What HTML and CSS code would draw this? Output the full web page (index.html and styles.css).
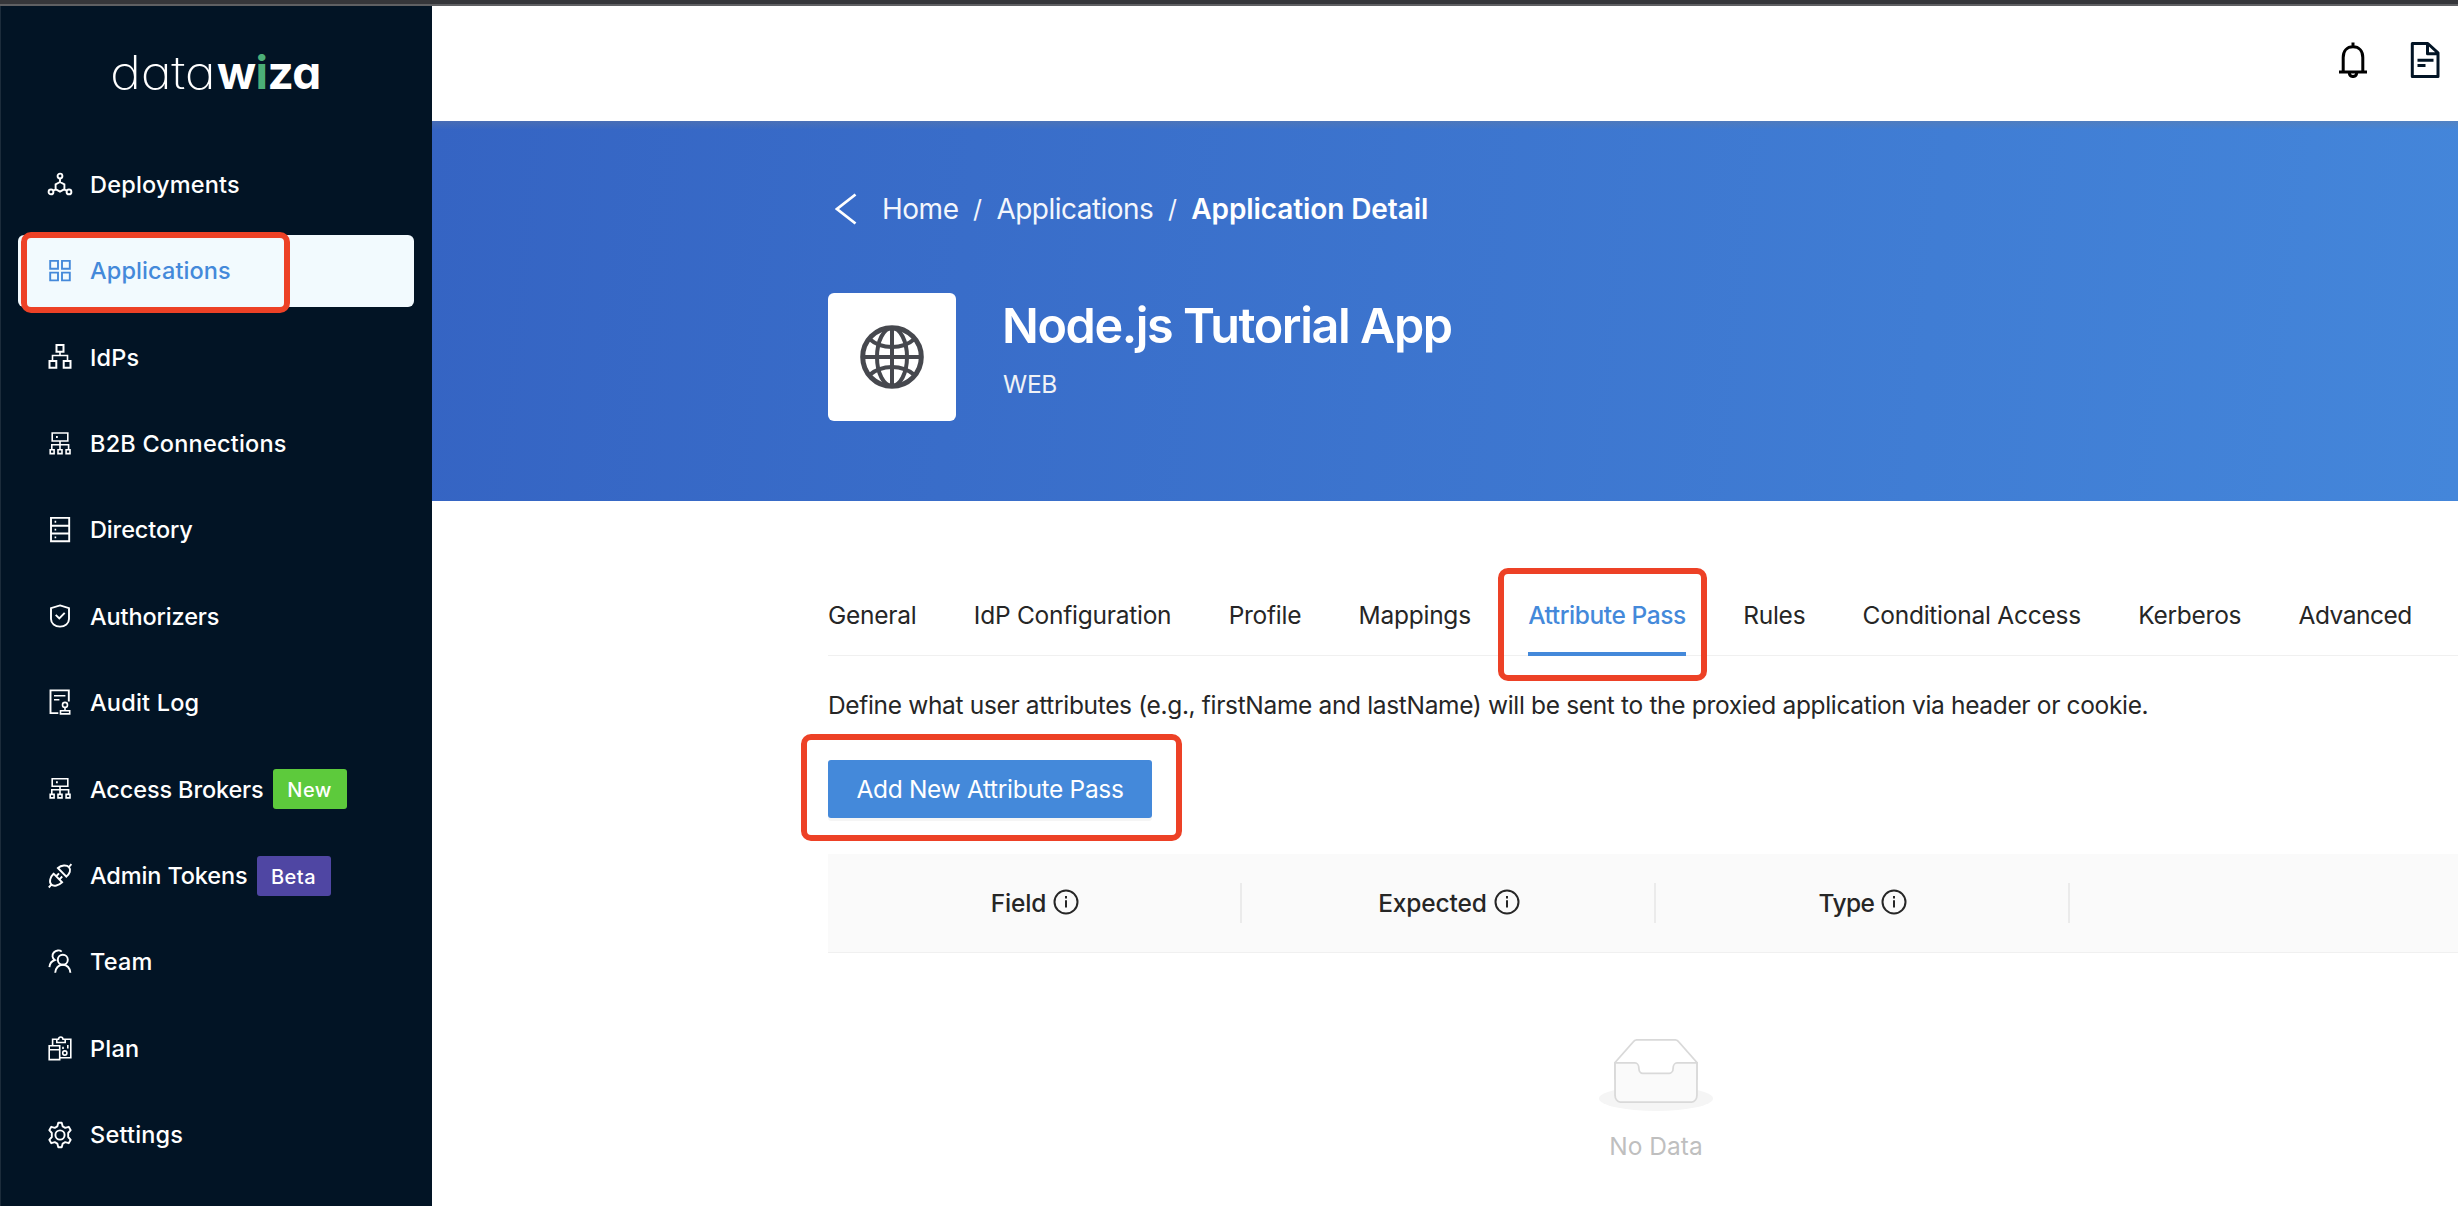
FILE: index.html
```html
<!DOCTYPE html>
<html lang="en">
<head>
<meta charset="utf-8">
<title>Datawiza - Application Detail</title>
<link rel="stylesheet" href="styles.css">
</head>
<body>
<div class="window-edge"></div>
<div class="shell">
  <aside class="sidebar">
    <div class="logo"><span class="logo-thin">data</span><span class="logo-bold">w<span class="logo-i">i</span>za</span></div>
    <nav class="menu">
      <a class="item"><svg class="icon" viewBox="0 0 26 26"><circle cx="13" cy="4" r="2.4"/><circle cx="4" cy="19.9" r="2.4"/><circle cx="22" cy="19.9" r="2.4"/><path d="M13 6.5v4M6.2 18.8l2.6-1.6M19.8 18.8l-2.6-1.6M13 10l4.4 2.4v4.8L13 19.6l-4.4-2.4v-4.8z"/></svg><span>Deployments</span></a>
      <a class="item active"><svg class="icon" viewBox="0 0 26 26"><path d="M3.2 2.900h7.800v7.900H3.200zM15 2.900h7.800v7.900H15zM3.200 14.600h7.800v7.800H3.200zM15 14.600h7.800v7.800H15z"/></svg><span>Applications</span><i class="mark mark-menu"></i></a>
      <a class="item"><svg class="icon bold" viewBox="0 0 26 26"><path d="M9.500 1h7v6.800h-7zM2.500 17h6.800v6.800H2.500zM16.700 17h6.800v6.800h-6.800z"/><path class="fine" d="M13 8v3.500M5.500 16.500v-5h15v5"/></svg><span>IdPs</span></a>
      <a class="item"><svg class="icon fine" viewBox="0 0 26 26"><path d="M5.200 2h15.600v8H5.200zM13 10v8.500M4.800 18.500v-4.800h16.800v4.800M3.200 18.700h3.900v3.900H3.200zM11 18.700h4v3.900h-4zM19.100 18.700h3.900v3.900h-3.900z"/><path d="M9 6h1.800" stroke-width="2"/></svg><span>B2B Connections</span></a>
      <a class="item"><svg class="icon" viewBox="0 0 26 26"><path d="M4 .9h18.200v23.400H4zM4 8.700h18.200M4 16.500h18.200"/><path d="M7.600 4.800h1.600M7.600 12.600h1.600M7.600 20.400h1.600"/></svg><span class="tight">Directory</span></a>
      <a class="item"><svg class="icon" viewBox="0 0 26 26"><path d="M13 1.400l9 2.700v11c0 4.400-4 7.300-9 7.500-5-.2-9-3.100-9-7.500v-11zM8.700 10.900l3.600 3.600 5.400-5.700"/></svg><span class="tight">Authorizers</span></a>
      <a class="item"><svg class="icon" viewBox="0 0 26 26"><path d="M21.800 11.500V.4H3.500v22.700h7.800"/><path class="fine" d="M7 5.700h11.400M7 9.800h5.400"/><circle cx="18" cy="14.900" r="2.500" class="fine"/><path class="fine" d="M18 17.400v3M13.500 20.700h9.200v3.200h-9.200z"/></svg><span>Audit Log</span></a>
      <a class="item"><svg class="icon fine" viewBox="0 0 26 26"><path d="M5.200 2.700h15.600v7.600H5.200zM13 10.300v8.200M4.800 18.500v-4.800h16.800v4.800M3.200 18.400h3.900v3.500H3.200zM11 18.400h4v3.500h-4zM19.100 18.400h3.900v3.500h-3.900z"/><path d="M9 6.300h1.800" stroke-width="2"/></svg><span class="tight">Access Brokers</span><b class="tag green">New</b></a>
      <a class="item"><svg class="icon" viewBox="0 0 26 26"><path d="M1.800 24.500l2.600-2.800M21.900 4l2.500-2.900M10.900 5l8.500 8.600c3.200-2.700 5-6.700 2.700-9.300S14.300 2 10.900 5zM6.600 10.700l8.500 8.600c-3.400 3.200-8.300 4.600-10.800 2.200s-1.100-7.700 2.300-10.800zM9 13.500l3-3.200M12.200 16.700l3-3.200"/></svg><span class="tight">Admin Tokens</span><b class="tag purple">Beta</b></a>
      <a class="item"><svg class="icon" viewBox="0 0 26 26"><circle cx="15.800" cy="10.800" r="5"/><path d="M8.200 23.800c.2-4.800 3.400-8 7.600-8s7.400 3.200 7.600 8M14.700 2.600C12.700.8 9 1 6.800 3.500S5.300 9.300 7.800 11c-3.200 1-5 3.300-5.400 7.200"/></svg><span>Team</span></a>
      <a class="item"><svg class="icon fine" viewBox="0 0 26 26"><path d="M5.600 9.500V3.200h5M15.800 3.200h8v18.500H13M9.800 6.500V3.200h1.700c.2-3 4.300-3 4.500 0h2.200v3.300zM2.200 9.800h10.500v13.800H2.200zM2.200 13.700h10.500M16 13v-2.200M20.800 12.500V9"/><circle cx="17.800" cy="17" r="2.100"/></svg><span>Plan</span></a>
      <a class="item"><svg class="icon" viewBox="0 0 26 26" stroke-linejoin="round"><circle cx="13" cy="13" r="4.600"/><path d="M11.300.8h3.400l1 3.600 2.500 1.400 3.500-1 2 3.400-2.500 2.800v4l2.500 2.800-2 3.400-3.500-1-2.500 1.400-1 3.600h-3.400l-1-3.600-2.500-1.400-3.500 1-2-3.400L4.800 15v-4L2.300 8.200l2-3.400 3.500 1 2.500-1.400z"/></svg><span>Settings</span></a>
    </nav>
  </aside>
  <main class="main">
    <header class="topbar">
      <svg class="bell" viewBox="0 0 28 36"><path d="M14 .5V5M4.200 29V15.500C4.200 9 8 4.800 14 4.800S23.800 9 23.800 15.500V29M0 30h28"/><path d="M10.300 31c.3 4.700 7.100 4.700 7.400 0"/></svg>
      <svg class="doc" viewBox="0 0 30 36"><path d="M2.300 1.500h15.500L28 10.800v23.700H2.300zM17.500 1.500v10.300H28"/><path d="M7.500 18.200h16M7.500 23.600h8"/></svg>
    </header>
    <section class="hero">
      <div class="crumbs">
        <svg class="back" viewBox="0 0 22 32"><path d="M20.500 1.500L2 16l18.500 14.500"/></svg>
        <span class="c-home">Home</span><span class="slash">/</span><span class="c-apps">Applications</span><span class="slash">/</span><strong>Application Detail</strong>
      </div>
      <div class="app">
        <div class="app-icon"><svg viewBox="0 0 64 64"><circle cx="32" cy="32" r="29.300" stroke-width="5"/><path d="M32 2v60M2 32h60" stroke-width="4"/><ellipse cx="32" cy="32" rx="15" ry="29" stroke-width="4"/><path d="M9.500 14c12 10.700 33 10.700 45 0M9.500 50c12-10.700 33-10.700 45 0" stroke-width="4"/></svg></div>
        <div>
          <h1>Node.js Tutorial App</h1>
          <div class="kind">WEB</div>
        </div>
      </div>
    </section>
    <section class="content">
      <div class="tabs">
        <span>General</span><span>IdP Configuration</span><span>Profile</span><span>Mappings</span><span class="tab-on">Attribute Pass<i class="mark mark-tab"></i></span><span>Rules</span><span>Conditional Access</span><span>Kerberos</span><span class="tight">Advanced</span>
      </div>
      <p class="desc">Define what user attributes (e.g., firstName and lastName) will be sent to the proxied application via header or cookie.</p>
      <div class="action"><button class="add">Add New Attribute Pass</button><i class="mark mark-add"></i></div>
      <div class="thead">
        <div class="th">Field<svg class="info" viewBox="0 0 26 26"><circle cx="13" cy="13" r="11.500"/><path d="M13 11.300v7.200M13 7v2.500"/></svg></div>
        <div class="th">Expected<svg class="info" viewBox="0 0 26 26"><circle cx="13" cy="13" r="11.500"/><path d="M13 11.300v7.200M13 7v2.500"/></svg></div>
        <div class="th th-type">Type<svg class="info" viewBox="0 0 26 26"><circle cx="13" cy="13" r="11.500"/><path d="M13 11.300v7.200M13 7v2.500"/></svg></div>
        <div class="th"></div>
      </div>
      <div class="empty">
        <svg viewBox="0 0 64 41"><g transform="translate(0 1)"><ellipse cx="32" cy="33" rx="32" ry="7" fill="#f5f5f5"/><g stroke="#d9d9d9"><path fill="#fff" d="M55 12.760L44.854 1.258C44.367.474 43.656 0 42.907 0H21.093c-.749 0-1.460.474-1.947 1.257L9 12.761V22h46v-9.240z"/><path fill="#fafafa" d="M41.613 15.931c0-1.605.994-2.930 2.227-2.931H55v18.137C55 33.260 53.680 35 52.050 35h-40.100C10.320 35 9 33.259 9 31.137V13h11.160c1.233 0 2.227 1.323 2.227 2.928v.022c0 1.605 1.005 2.901 2.237 2.901h14.752c1.232 0 2.237-1.308 2.237-2.913v-.007z"/></g></g></svg>
        <div>No Data</div>
      </div>
    </section>
  </main>
</div>
</body>
</html>
```
FILE: styles.css
```css
* { box-sizing: border-box; }
body {
  margin: 0;
  height: 1206px;
  overflow: hidden;
  background: #fff;
  color: #262626;
  font: 400 24.5px/1 Inter, "Liberation Sans", sans-serif;
  letter-spacing: -0.25px;
}
svg { display: block; flex: none; fill: none; }
.window-edge { height: 6px; background: #35363a; border-bottom: 2px solid #5f6063; }
.shell { display: flex; height: 1200px; }

/* Sidebar */
.sidebar {
  width: 432px;
  flex: none;
  background: #021425;
  border-left: 1px solid #1c2c3b;
  color: #fff;
}
.logo {
  height: 142.6px;
  padding: 33px 0 0 109px;
  display: flex;
  font-size: 46px;
  line-height: 66px;
  font-feature-settings: "cv11";
  white-space: nowrap;
}
.logo-thin { width: 107px; font-weight: 250; letter-spacing: -0.3px; transform: scaleX(1.14); transform-origin: left; }
.logo-bold { font-weight: 750; letter-spacing: -0.6px; }
.logo-i { color: #4caf78; }
.menu { display: flex; flex-direction: column; gap: 14.4px; padding: 0 18px 0 17px; }
.item {
  position: relative;
  height: 72px;
  padding-left: 28.5px;
  display: flex;
  align-items: center;
  border-radius: 6px;
  font-size: 23.5px;
  font-weight: 500;
  letter-spacing: 0.2px;
}
.item .tight { letter-spacing: -0.13px; }
.item.active { background: #f2fafe; color: #4489da; letter-spacing: 0.1px; }
.icon { width: 26px; height: 26px; margin-right: 17.5px; stroke: currentColor; stroke-width: 1.9; overflow: visible; }
.icon.bold { stroke-width: 2; }
.icon.fine, .icon .fine { stroke-width: 1.6; }
.tag {
  height: 40px;
  width: 74px;
  margin-left: 9px;
  border-radius: 3px;
  font-size: 20px;
  font-weight: 500;
  letter-spacing: 0.5px;
  line-height: 42px;
  text-align: center;
}
.green { background: #5dca3c; }
.purple { background: #4f46a3; }

/* Highlight frames */
.mark { position: absolute; border: 6px solid #ed4126; border-radius: 10px; }
.mark-menu { left: 3px; top: -3px; width: 269px; height: 81px; }
.mark-tab { left: -30px; top: -14px; width: 209px; height: 113px; }
.mark-add { left: -27px; top: -26px; width: 381px; height: 107px; }

/* Main column */
.main { flex: 1; min-width: 0; overflow: hidden; }
.topbar {
  height: 115px;
  padding: 36px 18px 0 0;
  display: flex;
  justify-content: flex-end;
  gap: 43px;
}
.bell { width: 28px; height: 36px; stroke: #000; stroke-width: 3; }
.doc { width: 30px; height: 36px; stroke: #021425; stroke-width: 3; stroke-linejoin: round; }
.hero {
  height: 380px;
  padding: 66px 0 0 396px;
  color: #fff;
  background: linear-gradient(180deg, rgba(110, 125, 150, .35), rgba(110, 125, 150, 0) 9px), linear-gradient(96deg, #3564c3, #4486da);
}
.crumbs { display: flex; align-items: center; height: 44px; font-size: 28px; padding-left: 7px; color: #f3f6fc; white-space: nowrap; }
.back { width: 22px; height: 32px; stroke: #fff; stroke-width: 2.8; margin-right: 25px; }
.c-home { letter-spacing: -0.5px; }
.c-apps { letter-spacing: -0.53px; }
.slash { width: 38px; text-align: center; font-size: 25px; }
.crumbs strong { font-weight: 600; letter-spacing: -0.1px; color: #fff; }
.app { display: flex; gap: 46px; margin-top: 62px; }
.app-icon { width: 128px; height: 128px; border-radius: 6px; background: #fff; display: flex; align-items: center; justify-content: center; }
.app-icon svg { width: 64px; height: 64px; stroke: #46484e; }
h1 { margin: 0; font-size: 48.5px; font-weight: 600; line-height: 65px; letter-spacing: -1.4px; }
.kind { padding-left: 1px; line-height: 53px; color: #f0f2f6; }

.content { padding: 81px 0 0 396px; }
.tabs {
  display: flex;
  gap: 57.3px;
  height: 74px;
  border-bottom: 1px solid #f0f0f0;
  white-space: nowrap;
}
.tabs span { padding-top: 20px; line-height: 26px; height: 74px; }
.tabs .tight { letter-spacing: -0.5px; }
.tabs .tab-on { position: relative; color: #4489da; font-weight: 500; letter-spacing: -0.42px; border-bottom: 4px solid #4489da; }
.desc { margin: 24px 0 30px; line-height: 50px; letter-spacing: -0.34px; white-space: nowrap; }
.action { position: relative; height: 58px; }
.add {
  display: block;
  width: 324px;
  height: 58px;
  padding: 0;
  border: 0;
  border-radius: 3px;
  background: #4489da;
  box-shadow: 0 3px 0 rgba(0, 0, 0, .04);
  color: #fff;
  font: inherit;
  letter-spacing: -0.32px;
}
.thead {
  display: flex;
  width: 1656px;
  height: 99px;
  margin-top: 36px;
  background: #fafafa;
  border-bottom: 1px solid #f0f0f0;
}
.th {
  width: 414px;
  margin: 29px 0;
  padding-left: 2px;
  border-right: 2px solid #ebebeb;
  display: flex;
  justify-content: center;
  align-items: center;
  gap: 7px;
  font-weight: 500;
  letter-spacing: -0.15px;
}
.th-type { letter-spacing: -0.55px; }
.info { width: 26px; height: 26px; margin-top: -2px; stroke: #262626; stroke-width: 2; }
.empty {
  width: 1656px;
  padding-top: 85px;
  display: flex;
  flex-direction: column;
  align-items: center;
  color: #bfbfbf;
  letter-spacing: 0;
}
.empty svg { width: 114px; height: 73px; }
.empty div { line-height: 71px; }
```
